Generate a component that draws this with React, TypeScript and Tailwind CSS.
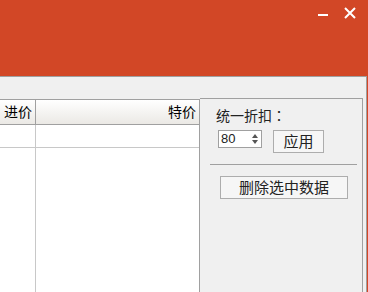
// 商品特价设置窗口

const font = "font-['Liberation_Sans','Noto_Sans_CJK_SC',sans-serif]";

function TitleBar() {
  return (
    <div className="h-[76px] bg-[#d24726] flex justify-end items-start">
      <button className="w-[28px] h-[26px] flex items-center justify-center mt-[2px]">
        <span className="block w-[10px] h-[2px] bg-white" />
      </button>
      <button className="w-[26px] h-[26px] flex items-center justify-center mr-[5px] mt-0">
        <svg className="w-[12px] h-[12px]" viewBox="0 0 12 12" fill="none" stroke="white" strokeWidth={2}>
          <path d="M1 1L11 11M11 1L1 11" />
        </svg>
      </button>
    </div>
  );
}

function PriceTable() {
  return (
    <div className="w-[200px] flex flex-col border-t border-[#a0a0a0] mt-[22px] bg-white border-r border-r-[#a0a0a0]">
      <div className="flex h-[25px] border-b border-[#a0a0a0] bg-gradient-to-b from-white to-[#ebe9e5] text-[14px] text-black">
        <div className="w-[36px] border-r border-[#a0a0a0] flex items-center justify-end pr-[3px]">进价</div>
        <div className="flex-1 flex items-center justify-end pr-[3px]">特价</div>
      </div>
      <div className="flex h-[23px] border-b border-[#c8c8c8]">
        <div className="w-[36px] border-r border-[#c8c8c8]" />
        <div className="flex-1" />
      </div>
      <div className="flex flex-1">
        <div className="w-[36px] border-r border-[#c8c8c8]" />
        <div className="flex-1" />
      </div>
    </div>
  );
}

function SidePanel() {
  return (
    <div className="flex-1 mt-[21px] mr-[3px] border-t border-r border-[#a0a0a0] flex flex-col pl-[16px] pt-[8px] text-[14px] text-[#222]">
      <div className="leading-[16px]">
        统一折扣<span className="font-['Noto_Sans_CJK_TC',sans-serif]">：</span>
      </div>
      <div className="flex items-start mt-[6px] ml-[2px]">
        <div className="w-[44px] h-[18px] border border-[#a0a0a0] bg-white flex items-center justify-between pl-[2px] pr-[3px] text-[13px]">
          <span>80</span>
          <svg className="w-[6px] h-[10px]" viewBox="0 0 6 10" fill="#555">
            <path d="M3 0L6 4H0Z" />
            <path d="M0 6H6L3 10Z" />
          </svg>
        </div>
        <button className="ml-[11px] w-[51px] h-[23px] border border-[#adadad] bg-[#f6f6f6] text-[15px] leading-none flex items-center justify-center">
          应用
        </button>
      </div>
      <div className="mt-[11px] -ml-[6px] mr-[5px] h-[1px] bg-[#a0a0a0]" />
      <button className="mt-[11px] ml-[4px] w-[128px] h-[23px] border border-[#adadad] bg-[#f6f6f6] text-[15px] leading-none flex items-center justify-center">
        删除选中数据
      </button>
    </div>
  );
}

export default function App() {
  return (
    <div className={`w-[368px] h-[292px] bg-[#d24726] flex flex-col overflow-hidden ${font}`}>
      <TitleBar />
      <div className="flex-1 flex bg-[#f0f0f0] border-t border-r border-[#a0a0a0] mr-[1px]">
        <PriceTable />
        <SidePanel />
      </div>
    </div>
  );
}
